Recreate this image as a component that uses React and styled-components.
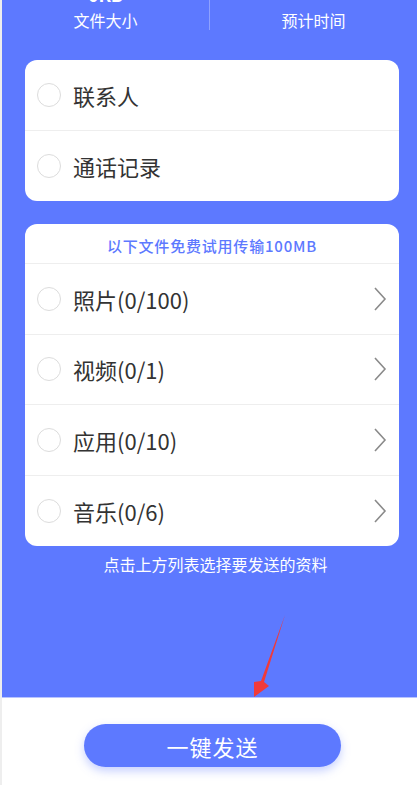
import React from 'react';
import styled, { createGlobalStyle } from 'styled-components';

const GlobalStyle = createGlobalStyle`
  html, body {
    margin: 0;
    padding: 0;
    background: #eeeeee;
  }
  body {
    font-family: 'Noto Sans CJK SC', 'Noto Sans', sans-serif;
  }
`;

const Page = styled.div`
  position: relative;
  margin-left: 2px;
  width: 415px;
  height: 785px;
  background: #ffffff;
  display: flex;
  flex-direction: column;
  overflow: hidden;
`;

const BlueArea = styled.div`
  background: #5d79ff;
  height: 698px;
  border-bottom: 1px solid #b8c4ff;
  box-sizing: border-box;
  display: flex;
  flex-direction: column;
  padding: 0 18px 0 23px;
`;

const Stats = styled.div`
  display: flex;
  height: 36px;
  margin: 0 -18px 24px -23px;
`;

const StatCol = styled.div`
  flex: 1;
  display: flex;
  flex-direction: column;
  align-items: center;
  color: #ffffff;
  border-left: ${p => (p.$divided ? '1px solid rgba(255,255,255,0.3)' : 'none')};
  height: 30px;
`;

const StatValue = styled.div`
  font-size: 18px;
  font-weight: 700;
  line-height: 18px;
  height: 18px;
  margin-top: -15px;
  visibility: ${p => (p.$hidden ? 'hidden' : 'visible')};
`;

const StatLabel = styled.div`
  font-size: 16px;
  line-height: 22px;
  margin-top: 6px;
`;

const Card = styled.div`
  background: #ffffff;
  border-radius: 12px;
  display: flex;
  flex-direction: column;
  margin-bottom: ${p => p.$gap || 0}px;
`;

const CardHeader = styled.div`
  height: 40px;
  display: flex;
  align-items: center;
  justify-content: center;
  color: #5d79ff;
  font-size: 15px;
  font-weight: 500;
  letter-spacing: 0.8px;
  border-bottom: 1px solid #eeeeee;
  box-sizing: border-box;
  padding-top: 4px;
`;

const Row = styled.div`
  height: 70.5px;
  display: flex;
  align-items: center;
  padding: 0 12px 0 12px;
  border-bottom: ${p => (p.$last ? 'none' : '1px solid #eeeeee')};
  box-sizing: border-box;
`;

const Radio = styled.span`
  width: 24px;
  height: 24px;
  border: 1px solid #dcdcdc;
  border-radius: 50%;
  box-sizing: border-box;
  flex-shrink: 0;
`;

const Label = styled.span`
  flex: 1;
  margin-left: 12px;
  font-size: 22px;
  color: #333333;
`;

const Chevron = styled.svg`
  width: 14px;
  height: 26px;
  flex-shrink: 0;
`;

const Caption = styled.div`
  text-align: center;
  color: #ffffff;
  font-size: 16px;
  margin-top: 6px;
  margin-right: -7px;
`;

const Bottom = styled.div`
  flex: 1;
  display: flex;
  justify-content: center;
  padding-top: 26px;
`;

const SendButton = styled.button`
  width: 257px;
  height: 43px;
  margin-left: 6px;
  border: none;
  border-radius: 22px;
  background: #5d79ff;
  color: #ffffff;
  font-family: 'Noto Sans CJK SC', 'Noto Sans', sans-serif;
  font-size: 22px;
  letter-spacing: 1px;
  box-shadow: 0 4px 10px rgba(93, 121, 255, 0.35);
`;

const Arrow = styled.svg`
  position: absolute;
  left: 0;
  top: 0;
  width: 417px;
  height: 785px;
  pointer-events: none;
`;

const ChevronIcon = () => (
  <Chevron viewBox="0 0 14 26">
    <polyline points="2,2 12,13 2,24" fill="none" stroke="#8a8a8a" strokeWidth="1.6" />
  </Chevron>
);

const Item = ({ label, arrow, last }) => (
  <Row $last={last}>
    <Radio />
    <Label>{label}</Label>
    {arrow && <ChevronIcon />}
  </Row>
);

export default function App() {
  return (
    <>
      <GlobalStyle />
      <Page>
        <BlueArea>
          <Stats>
            <StatCol>
              <StatValue>0KB</StatValue>
              <StatLabel>文件大小</StatLabel>
            </StatCol>
            <StatCol $divided>
              <StatValue $hidden>0</StatValue>
              <StatLabel>预计时间</StatLabel>
            </StatCol>
          </Stats>
          <Card $gap={23}>
            <Item label="联系人" />
            <Item label="通话记录" last />
          </Card>
          <Card>
            <CardHeader>以下文件免费试用传输100MB</CardHeader>
            <Item label="照片(0/100)" arrow />
            <Item label="视频(0/1)" arrow />
            <Item label="应用(0/10)" arrow />
            <Item label="音乐(0/6)" arrow last />
          </Card>
          <Caption>点击上方列表选择要发送的资料</Caption>
        </BlueArea>
        <Bottom>
          <SendButton>一键发送</SendButton>
        </Bottom>
        <Arrow viewBox="0 0 417 785">
          <polygon points="285,615 264,682 269,686 254,697 254,682 261,681" fill="#f03a3a" transform="translate(-2,0)" />
        </Arrow>
      </Page>
    </>
  );
}
